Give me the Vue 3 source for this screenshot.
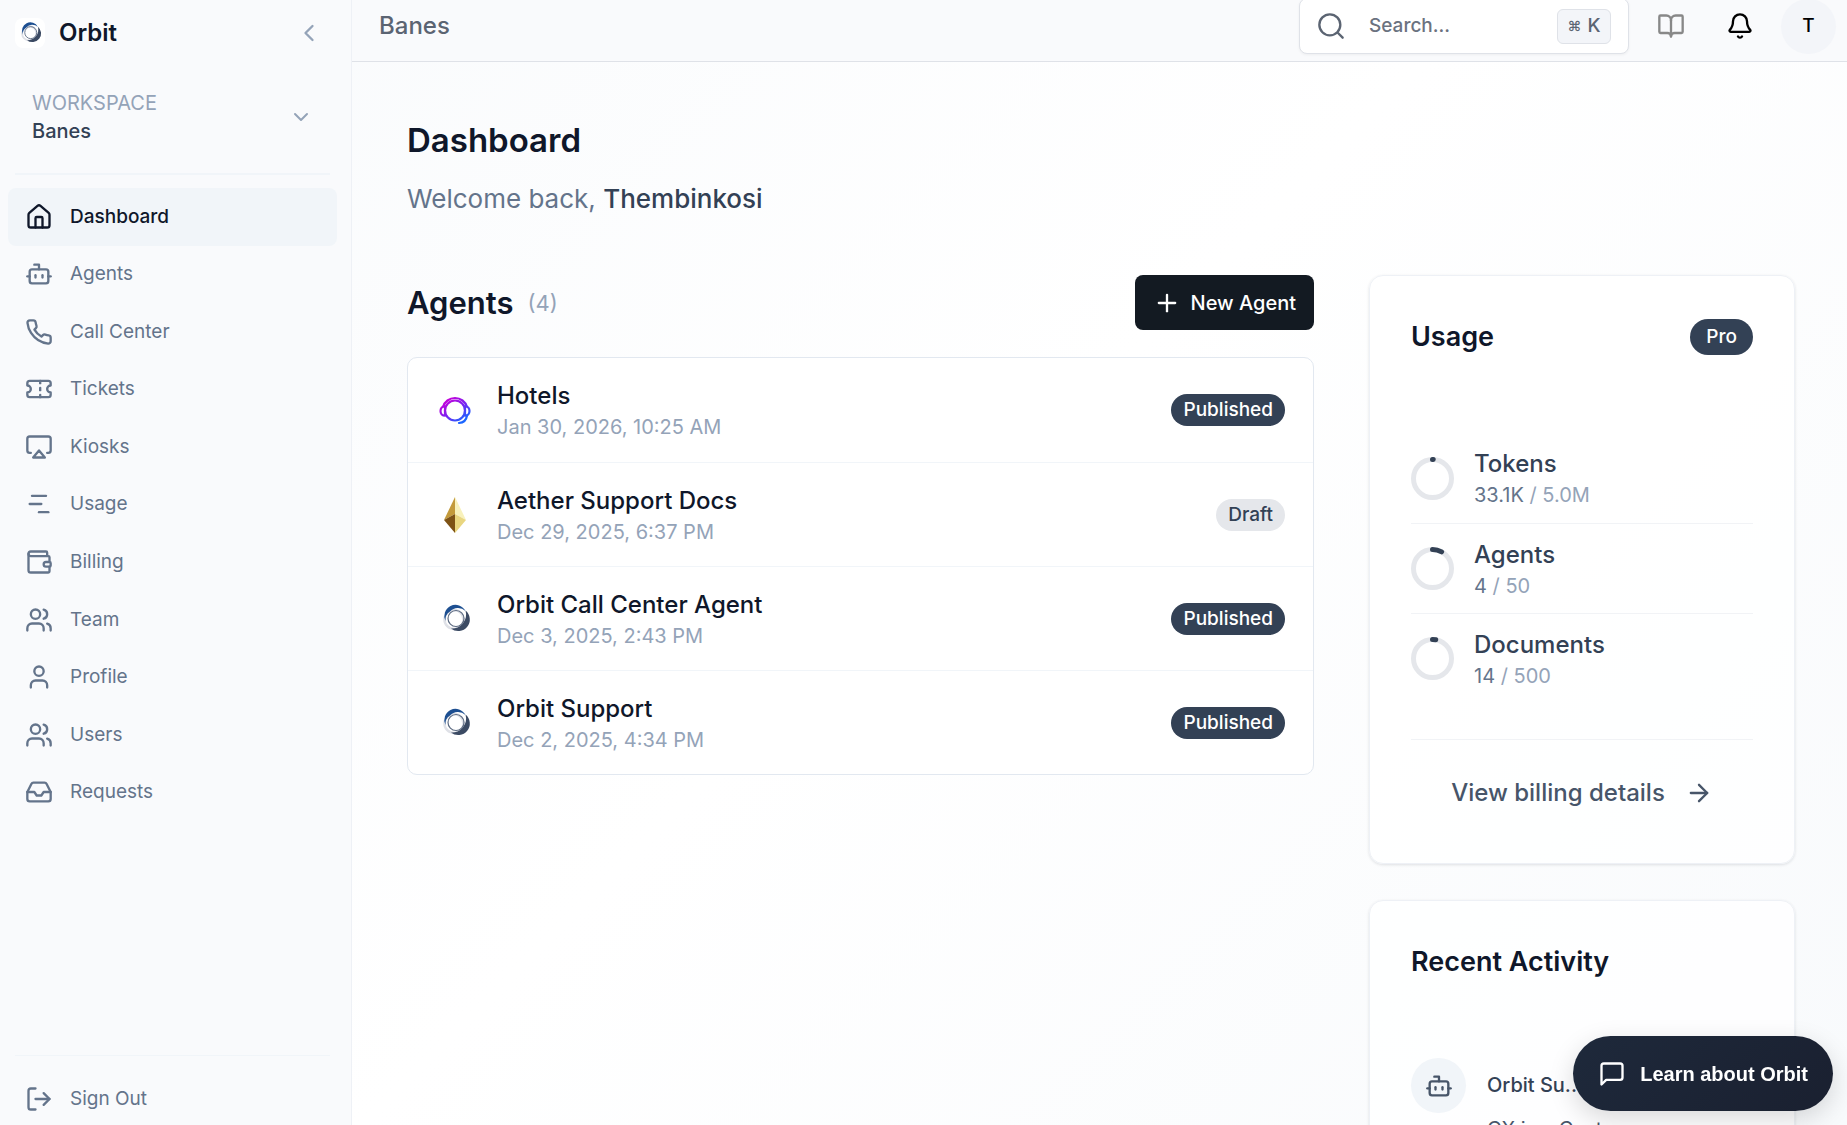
<script setup>
import { ref } from "vue";

const icons = {
  house: [
    "M15 21v-8a1 1 0 0 0-1-1h-4a1 1 0 0 0-1 1v8",
    "M3 10a2 2 0 0 1 .709-1.528l7-5.999a2 2 0 0 1 2.582 0l7 5.999A2 2 0 0 1 21 10v9a2 2 0 0 1-2 2H5a2 2 0 0 1-2-2z",
  ],
  bot: [
    "M12 8V4H8",
    "M6 8h12a2 2 0 0 1 2 2v8a2 2 0 0 1-2 2H6a2 2 0 0 1-2-2v-8a2 2 0 0 1 2-2z",
    "M2 14h2",
    "M20 14h2",
    "M15 13v2",
    "M9 13v2",
  ],
  phone: [
    "M22 16.92v3a2 2 0 0 1-2.18 2 19.79 19.79 0 0 1-8.63-3.07 19.5 19.5 0 0 1-6-6 19.79 19.79 0 0 1-3.07-8.67A2 2 0 0 1 4.11 2h3a2 2 0 0 1 2 1.72c.127.96.361 1.903.7 2.81a2 2 0 0 1-.45 2.11L8.09 9.91a16 16 0 0 0 6 6l1.27-1.27a2 2 0 0 1 2.11-.45c.907.339 1.85.573 2.81.7A2 2 0 0 1 22 16.92z",
  ],
  ticket: [
    "M2 9a3 3 0 0 1 0 6v2a2 2 0 0 0 2 2h16a2 2 0 0 0 2-2v-2a3 3 0 0 1 0-6V7a2 2 0 0 0-2-2H4a2 2 0 0 0-2 2z",
    "M13 5v2",
    "M13 17v2",
    "M13 11v2",
  ],
  airplay: [
    "M5 17H4a2 2 0 0 1-2-2V5a2 2 0 0 1 2-2h16a2 2 0 0 1 2 2v10a2 2 0 0 1-2 2h-1",
    "M12 15l5 6H7z",
  ],
  gantt: ["M6 5h12", "M4 12h10", "M12 19h8"],
  wallet: [
    "M19 7V4a1 1 0 0 0-1-1H5a2 2 0 0 0 0 4h15a1 1 0 0 1 1 1v4h-3a2 2 0 0 0 0 4h3a1 1 0 0 0 1-1v-2a1 1 0 0 0-1-1",
    "M3 5v14a2 2 0 0 0 2 2h15a1 1 0 0 0 1-1v-4",
  ],
  users: [
    "M16 21v-2a4 4 0 0 0-4-4H6a4 4 0 0 0-4 4v2",
    "M9 3a4 4 0 1 0 0 8 4 4 0 0 0 0-8z",
    "M22 21v-2a4 4 0 0 0-3-3.87",
    "M16 3.13a4 4 0 0 1 0 7.75",
  ],
  user: [
    "M19 21v-2a4 4 0 0 0-4-4H9a4 4 0 0 0-4 4v2",
    "M12 3a4 4 0 1 0 0 8 4 4 0 0 0 0-8z",
  ],
  inbox: [
    "M22 12h-6l-2 3h-4l-2-3H2",
    "M5.45 5.11L2 12v6a2 2 0 0 0 2 2h16a2 2 0 0 0 2-2v-6l-3.45-6.89A2 2 0 0 0 16.76 4H7.24a2 2 0 0 0-1.79 1.11z",
  ],
};

const navItems = [
  { label: "Dashboard", icon: "house" },
  { label: "Agents", icon: "bot" },
  { label: "Call Center", icon: "phone" },
  { label: "Tickets", icon: "ticket" },
  { label: "Kiosks", icon: "airplay" },
  { label: "Usage", icon: "gantt" },
  { label: "Billing", icon: "wallet" },
  { label: "Team", icon: "users" },
  { label: "Profile", icon: "user" },
  { label: "Users", icon: "users" },
  { label: "Requests", icon: "inbox" },
];

const agents = [
  { id: 1, name: "Hotels", date: "Jan 30, 2026, 10:25 AM", status: "Published", logo: "headset" },
  { id: 2, name: "Aether Support Docs", date: "Dec 29, 2025, 6:37 PM", status: "Draft", logo: "gem" },
  { id: 3, name: "Orbit Call Center Agent", date: "Dec 3, 2025, 2:43 PM", status: "Published", logo: "orbit" },
  { id: 4, name: "Orbit Support", date: "Dec 2, 2025, 4:34 PM", status: "Published", logo: "orbit" },
];

const usage = [
  { name: "Tokens", used: "33.1K", total: "5.0M", percent: 0.66 },
  { name: "Agents", used: "4", total: "50", percent: 8 },
  { name: "Documents", used: "14", total: "500", percent: 2.8 },
];

const active = ref("Dashboard");
const search = ref("");
</script>

<template>
  <div class="app">
    <!-- shared logo drawing -->
    <svg class="defs" aria-hidden="true">
      <symbol id="orbit-logo" viewBox="0 0 40 40">
        <circle cx="19" cy="20.5" r="9.5" fill="none" stroke="#dfe1e7" stroke-width="2.5" />
        <path d="M30.5 11.5A11 11 0 0 1 16 29.500A14 14 0 0 0 30.500 11.500z" fill="#3b4a63" />
        <path d="M10.500 22A11 11 0 0 1 30.500 12A11 11 0 0 0 15 12.500A10 10 0 0 0 10.500 22z" fill="#1d4f91" />
        <circle cx="21" cy="19.500" r="8" fill="none" stroke="#5d6b82" stroke-width="1.200" />
      </symbol>
    </svg>

    <aside class="sidebar">
      <div class="brand">
        <svg class="brand-logo" aria-hidden="true"><use href="#orbit-logo" /></svg>
        <span class="brand-name">Orbit</span>
        <button class="collapse" type="button" aria-label="Collapse sidebar">
          <svg class="icon" viewBox="0 0 24 24"><path d="M15 18l-6-6 6-6" /></svg>
        </button>
      </div>

      <button class="workspace" type="button">
        <span class="workspace-text">
          <span class="workspace-label">WORKSPACE</span>
          <span class="workspace-name">Banes</span>
        </span>
        <svg class="icon" viewBox="0 0 24 24"><path d="M6 9l6 6 6-6" /></svg>
      </button>

      <nav class="nav">
        <a
          v-for="item in navItems"
          :key="item.label"
          href="#"
          class="nav-link"
          :class="{ active: active === item.label }"
          @click.prevent="active = item.label"
        >
          <svg class="icon" viewBox="0 0 24 24">
            <path v-for="d in icons[item.icon]" :key="d" :d="d" />
          </svg>
          {{ item.label }}
        </a>
      </nav>

      <div class="signout">
        <button class="nav-link" type="button">
          <svg class="icon" viewBox="0 0 24 24">
            <path d="M9 21H5a2 2 0 0 1-2-2V5a2 2 0 0 1 2-2h4" />
            <path d="M16 17l5-5-5-5" />
            <path d="M21 12H9" />
          </svg>
          Sign Out
        </button>
      </div>
    </aside>

    <div class="page">
      <header class="topbar">
        <span class="crumb">Banes</span>
        <label class="search">
          <svg class="icon" viewBox="0 0 24 24">
            <circle cx="11" cy="11" r="9" />
            <path d="M22 22l-4-4" />
          </svg>
          <input v-model="search" type="text" placeholder="Search..." aria-label="Search" />
          <kbd><span class="cmd">⌘</span> K</kbd>
        </label>
        <button class="icon-button book" type="button" aria-label="Documentation">
          <svg class="icon" viewBox="0 0 24 24">
            <path d="M12 7v14" />
            <path d="M3 18a1 1 0 0 1-1-1V4a1 1 0 0 1 1-1h5a4 4 0 0 1 4 4 4 4 0 0 1 4-4h5a1 1 0 0 1 1 1v13a1 1 0 0 1-1 1h-6a3 3 0 0 0-3 3 3 3 0 0 0-3-3z" />
          </svg>
        </button>
        <button class="icon-button" type="button" aria-label="Notifications">
          <svg class="icon" viewBox="0 0 24 24">
            <path d="M10.268 21a2 2 0 0 0 3.464 0" />
            <path d="M3.262 15.326A1 1 0 0 0 4 17h16a1 1 0 0 0 .74-1.673C19.41 13.956 18 12.499 18 8A6 6 0 0 0 6 8c0 4.499-1.411 5.956-2.738 7.326" />
          </svg>
        </button>
        <button class="avatar" type="button">T</button>
      </header>

      <main class="content">
        <h1>Dashboard</h1>
        <p class="welcome">Welcome back, <strong>Thembinkosi</strong></p>

        <div class="columns">
          <section class="agents">
            <div class="agents-head">
              <h2>Agents</h2>
              <span class="count">(4)</span>
              <button class="new-agent" type="button">
                <svg class="icon" viewBox="0 0 24 24"><path d="M5 12h14" /><path d="M12 5v14" /></svg>
                New Agent
              </button>
            </div>

            <ul class="agent-list">
              <li v-for="agent in agents" :key="agent.id" class="agent">
                <svg v-if="agent.logo === 'headset'" class="agent-logo" viewBox="0 0 40 40">
                  <defs>
                    <linearGradient id="headset" gradientUnits="userSpaceOnUse" x1="10" y1="6" x2="30" y2="34">
                      <stop offset="0.15" stop-color="#c004dc" />
                      <stop offset="0.5" stop-color="#7a22f0" />
                      <stop offset="0.9" stop-color="#1a66ff" />
                    </linearGradient>
                  </defs>
                  <g fill="none" stroke="url(#headset)" stroke-width="2.2">
                    <circle cx="20" cy="20.5" r="10" />
                    <path d="M8 17a12.500 12.500 0 0 1 24 0" />
                    <path d="M10 16.500c-6-1-6 10 0 9z" />
                    <path d="M30 16.500c6-1 6 10 0 9z" />
                    <path d="M32 25.500q-1 7-8 7.500" stroke-linecap="round" />
                  </g>
                </svg>
                <svg v-else-if="agent.logo === 'gem'" class="agent-logo" viewBox="0 0 40 40">
                  <path d="M20 2L9 25l11-6z" fill="#c39a3b" />
                  <path d="M20 2l11 23-11-6z" fill="#f8f1bb" />
                  <path d="M9 25l11-6v19z" fill="#7d5215" />
                  <path d="M31 25l-11-6v19z" fill="#e9d680" />
                </svg>
                <svg v-else class="agent-logo"><use href="#orbit-logo" /></svg>
                <div class="agent-text">
                  <div class="agent-name">{{ agent.name }}</div>
                  <div class="agent-date">{{ agent.date }}</div>
                </div>
                <span class="badge" :class="{ draft: agent.status === 'Draft' }">{{ agent.status }}</span>
              </li>
            </ul>
          </section>

          <div class="side">
            <section class="card">
              <div class="card-head">
                <h3>Usage</h3>
                <span class="badge plan">Pro</span>
              </div>
              <ul class="usage-list">
                <li v-for="row in usage" :key="row.name" class="usage-row">
                  <svg class="ring" viewBox="0 0 43 43">
                    <circle cx="21.5" cy="21.5" r="19" stroke="#e5e7eb" />
                    <circle
                      cx="21.5"
                      cy="21.5"
                      r="19"
                      stroke="#334155"
                      stroke-linecap="round"
                      pathLength="100"
                      :stroke-dasharray="`${row.percent} 100`"
                      transform="rotate(-90 21.5 21.5)"
                    />
                  </svg>
                  <div>
                    <div class="usage-name">{{ row.name }}</div>
                    <div class="usage-value">{{ row.used }} <span>/ {{ row.total }}</span></div>
                  </div>
                </li>
              </ul>
              <div class="card-foot">
                <a href="#">
                  View billing details
                  <svg class="icon" viewBox="0 0 24 24"><path d="M5 12h14" /><path d="M12 5l7 7-7 7" /></svg>
                </a>
              </div>
            </section>

            <section class="card">
              <div class="card-head">
                <h3>Recent Activity</h3>
              </div>
              <div class="activity">
                <span class="activity-icon">
                  <svg class="icon" viewBox="0 0 24 24">
                    <path v-for="d in icons.bot" :key="d" :d="d" />
                  </svg>
                </span>
                <div>
                  <div class="activity-name">Orbit Su...</div>
                  <div class="activity-text">CX is a Custome...</div>
                </div>
              </div>
            </section>
          </div>
        </div>
      </main>
    </div>

    <button class="learn" type="button">
      <svg class="icon" viewBox="0 0 24 24">
        <path d="M21 15a2 2 0 0 1-2 2H7l-4 4V5a2 2 0 0 1 2-2h14a2 2 0 0 1 2 2z" />
      </svg>
      Learn about Orbit
    </button>
  </div>
</template>

<style>
body {
  overflow: hidden;
}
</style>

<style scoped>
* {
  box-sizing: border-box;
}

.app {
  display: flex;
  height: 100vh;
  overflow: hidden;
  font-family: Inter, "Liberation Sans", sans-serif;
  font-size: 20px;
  line-height: 28px;
  color: #0f172a;
  background: linear-gradient(135deg, #f8fafc, #ffffff 50%, #f8fafc);
}

h1,
h2,
h3,
p,
ul {
  margin: 0;
  padding: 0;
}

ul {
  list-style: none;
}

button {
  padding: 0;
  border: 0;
  background: none;
  font: inherit;
  color: inherit;
  cursor: pointer;
}

a {
  color: inherit;
  text-decoration: none;
}

.defs {
  position: absolute;
  width: 0;
  height: 0;
}

.icon {
  flex: none;
  width: 28px;
  height: 28px;
  fill: none;
  stroke: currentColor;
  stroke-width: 2;
  stroke-linecap: round;
  stroke-linejoin: round;
}

/* sidebar */
.sidebar {
  display: flex;
  flex-direction: column;
  flex: none;
  width: 352px;
  border-right: 1px solid #eef1f6;
  background: #f9fafc;
}

.brand {
  display: flex;
  align-items: center;
  height: 66px;
  padding: 0 28px 0 15px;
}

.brand-logo {
  width: 30px;
  height: 30px;
  border-radius: 8px;
  background: #ffffff;
}

.brand-name {
  margin-left: 14px;
  font-size: 24px;
  font-weight: 600;
}

.collapse {
  display: flex;
  margin-left: auto;
  color: #94a3b8;
}

.workspace {
  display: flex;
  align-items: center;
  justify-content: space-between;
  margin: 0 21px 13px 15px;
  padding: 23px 17px 28px;
  border-bottom: 2px solid #f1f5f9;
  text-align: left;
}

.workspace .icon {
  width: 24px;
  height: 24px;
  color: #94a3b8;
}

.workspace-text {
  display: flex;
  flex-direction: column;
}

.workspace-label {
  color: #94a3b8;
}

.workspace-name {
  font-weight: 500;
  color: #334155;
}

.nav {
  display: grid;
  height: 633px;
  margin: 0 14px 0 8px;
}

.nav-link {
  display: flex;
  align-items: center;
  gap: 17px;
  padding: 0 17px;
  border-radius: 8px;
  font-size: 19px;
  color: #64748b;
}

.nav-link.active {
  background: #f1f5f9;
  color: #0f172a;
  font-weight: 500;
}

.signout {
  display: flex;
  height: 70px;
  margin: auto 21px 0 15px;
  padding-top: 14px;
  border-top: 1px solid #f1f5f9;
}

.signout .nav-link {
  height: 58px;
  padding: 0 10px;
}

/* top bar */
.page {
  display: flex;
  flex-direction: column;
  flex: 1;
  min-width: 0;
}

.topbar {
  display: flex;
  align-items: center;
  flex: none;
  height: 62px;
  padding: 0 11px 9px 27px;
  border-bottom: 1px solid #dfe2e8;
  background: #f9fafc;
}

.crumb {
  margin-right: auto;
  font-size: 24px;
  font-weight: 500;
  color: #5b6472;
}

.search {
  display: flex;
  align-items: center;
  flex: none;
  width: 330px;
  height: 56px;
  padding: 0 17px;
  border: 1px solid #dfe2e8;
  border-radius: 8px;
  background: #ffffff;
  box-shadow: 0 1px 3px rgba(0, 0, 0, 0.05);
  color: #5b6472;
}

.search input {
  flex: 1;
  min-width: 0;
  margin-left: 24px;
  padding: 0;
  border: 0;
  outline: 0;
  background: none;
  font: inherit;
  font-size: 19px;
  font-weight: 500;
  color: inherit;
}

.search input::placeholder {
  color: #6b7280;
  opacity: 1;
}

kbd {
  display: flex;
  align-items: center;
  justify-content: center;
  gap: 6px;
  width: 54px;
  height: 35px;
  border: 1px solid #dfe2e8;
  border-radius: 6px;
  background: #f3f5f9;
  font-family: inherit;
  font-size: 19px;
  font-weight: 500;
}

.cmd {
  font-size: 14px;
}

.icon-button {
  display: flex;
  justify-content: center;
  flex: none;
  width: 55px;
  margin-left: 14px;
  color: #000000;
}

.book {
  color: #888888;
}

.avatar {
  flex: none;
  width: 55px;
  height: 55px;
  margin-left: 14px;
  border-radius: 50%;
  background: #f3f5f9;
  font-size: 19px;
  font-weight: 500;
  color: #000000;
}

/* main column */
.content {
  flex: 1;
  min-height: 0;
  padding: 56px 52px 0 55px;
}

h1 {
  font-size: 33px;
  line-height: 44px;
  font-weight: 600;
}

.welcome {
  margin: 19px 0 58px;
  font-size: 26px;
  line-height: 36px;
  color: #64748b;
}

.welcome strong {
  font-weight: 500;
  color: #334155;
}

.columns {
  display: grid;
  grid-template-columns: repeat(3, minmax(0, 1fr));
  gap: 55px;
  align-items: start;
}

.agents {
  grid-column: span 2;
}

.agents-head {
  display: flex;
  align-items: center;
}

h2 {
  font-size: 31px;
  line-height: 40px;
  font-weight: 600;
}

.count {
  margin-left: 14px;
  font-size: 22px;
  color: #94a3b8;
}

.new-agent {
  display: flex;
  align-items: center;
  gap: 10px;
  height: 55px;
  margin-left: auto;
  padding: 0 18px;
  border-radius: 8px;
  background: #131a22;
  font-weight: 500;
  color: #ffffff;
}

.agent-list {
  margin-top: 27px;
  border: 1px solid #e2e8f0;
  border-radius: 10px;
  background: #ffffff;
}

.agent {
  display: flex;
  align-items: center;
  height: 104px;
  padding: 0 28px 0 27px;
}

.agent + .agent {
  border-top: 1px solid #f1f5f9;
}

.agent-logo {
  flex: none;
  width: 40px;
  height: 40px;
}

.agent-text {
  flex: 1;
  margin-left: 22px;
}

.agent-name {
  font-size: 24px;
  line-height: 34px;
  font-weight: 500;
}

.agent-date {
  color: #94a3b8;
}

.badge {
  padding: 2px 12px;
  border-radius: 18px;
  background: #334155;
  font-size: 19px;
  font-weight: 500;
  color: #ffffff;
}

.badge.draft {
  background: #e5e7eb;
  color: #334155;
}

.badge.plan {
  padding: 4px 16px;
}

/* right column */
.side {
  display: grid;
  gap: 36px;
}

.card {
  padding: 41px;
  border: 1px solid #eef1f6;
  border-radius: 14px;
  background: rgba(255, 255, 255, 0.8);
  box-shadow: 0 1px 3px rgba(15, 23, 42, 0.12);
}

.card-head {
  display: flex;
  align-items: center;
  justify-content: space-between;
  height: 40px;
}

h3 {
  font-size: 27px;
  line-height: 36px;
  font-weight: 600;
}

.usage-list {
  margin-top: 76px;
}

.usage-row {
  display: flex;
  align-items: center;
  gap: 20px;
  height: 90px;
}

.usage-row + .usage-row {
  border-top: 1px solid #f1f3f6;
}

.ring {
  flex: none;
  width: 43px;
  height: 43px;
  fill: none;
  stroke-width: 5;
}

.usage-name {
  font-size: 24px;
  line-height: 34px;
  font-weight: 500;
  color: #334155;
}

.usage-value {
  color: #64748b;
}

.usage-value span {
  color: #94a3b8;
}

.card-foot {
  margin-top: 36px;
  padding: 36px 0 12px;
  border-top: 1px solid #f1f3f6;
}

.card-foot a {
  display: flex;
  align-items: center;
  justify-content: center;
  gap: 20px;
  font-size: 24px;
  line-height: 34px;
  font-weight: 500;
  color: #475569;
}

.activity {
  display: flex;
  gap: 21px;
  margin-top: 76px;
}

.activity-icon {
  display: flex;
  align-items: center;
  justify-content: center;
  flex: none;
  width: 55px;
  height: 55px;
  border-radius: 50%;
  background: #f1f5f9;
  color: #475569;
}

.activity-name {
  padding: 13px 0 16px;
  font-weight: 500;
  color: #334155;
}

.activity-text {
  color: #475569;
}

.learn {
  position: fixed;
  right: 14px;
  bottom: 14px;
  display: flex;
  align-items: center;
  gap: 14px;
  height: 75px;
  padding: 0 25px;
  border-radius: 38px;
  background: linear-gradient(135deg, #1e293b, #1a2030);
  box-shadow: 0 8px 26px rgba(0, 0, 0, 0.15);
  font-family: "Liberation Sans", Arial, sans-serif;
  font-weight: 700;
  color: #ffffff;
}
</style>
